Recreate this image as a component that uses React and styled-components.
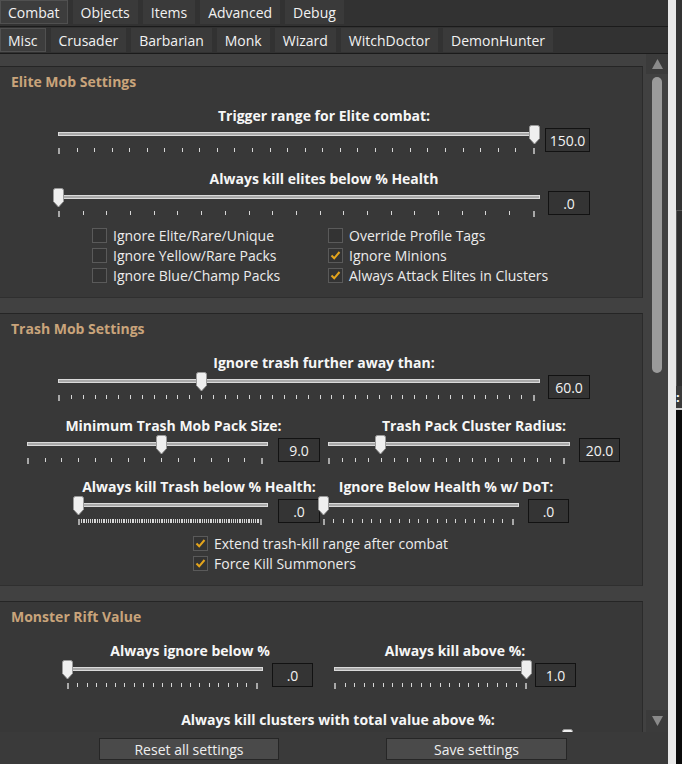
import React from 'react'
import styled, { createGlobalStyle } from 'styled-components'

const Global = createGlobalStyle`
  html, body { margin: 0; padding: 0; background: #333333; }
  body { font-family: "Open Sans", "Noto Sans", sans-serif; color: #eeeeee; }
  * { box-sizing: border-box; }
`

const Root = styled.div`
  display: flex;
  width: 682px;
  height: 764px;
  overflow: hidden;
`

const Main = styled.div`
  width: 668px;
  display: flex;
  flex-direction: column;
  background: #333333;
`

const TabStrip = styled.div`
  display: flex;
  gap: 5px;
  height: 27px;
  padding-top: ${(p) => p.$top}px;
  border-bottom: 1px solid #1b1b1b;
  background: #323232;
`

const Tab = styled.div`
  height: 24px;
  padding: 0 7px;
  display: flex;
  align-items: center;
  font-size: 14px;
  color: #f2f2f2;
  background: ${(p) => (p.$active ? '#3d3d3d' : '#3a3a3a')};
  border: 1px solid ${(p) => (p.$active ? '#505050' : '#3a3a3a')};
`

const Body = styled.div`
  flex: 1;
  display: flex;
  min-height: 0;
  background: #414141;
`

const Viewport = styled.div`
  flex: 1;
  overflow: hidden;
  padding: 12px 3px 0 0;
`

const Group = styled.section`
  background: #383838;
  border-top: 1px solid #252525;
  border-right: 1px solid #2b2b2b;
  border-bottom: 1px solid #2f2f2f;
  padding: 6px 0 12px;
  margin-bottom: ${(p) => p.$mb ?? 15}px;
`

const GroupTitle = styled.div`
  padding-left: 11px;
  height: 18px;
  line-height: 18px;
  font-size: 14px;
  font-weight: 700;
  color: #c9a47b;
  margin-bottom: 16px;
`

const SliderRow = styled.div`
  display: flex;
  margin-top: ${(p) => p.$mt || 0}px;
`

const Block = styled.div`
  margin-left: ${(p) => p.$ml}px;
  display: flex;
  flex-direction: column;
`

const Label = styled.div`
  height: 18px;
  line-height: 18px;
  text-align: center;
  font-size: 14px;
  font-weight: 700;
  color: #f6f6f6;
  white-space: nowrap;
`

const Controls = styled.div`
  display: flex;
  align-items: flex-start;
`

const TrackArea = styled.div`
  width: ${(p) => p.$w}px;
  display: flex;
  flex-direction: column;
`

const TrackWrap = styled.div`
  position: relative;
  height: 20px;
`

const Line = styled.div`
  margin-top: 7px;
  height: 4px;
  background: #a9a9a9;
  border: 1px solid #dadada;
`

const ThumbSvg = styled.svg`
  position: absolute;
  top: 0;
`

const Ticks = styled.div`
  margin-top: 3px;
  width: ${(p) => p.$w}px;
  height: 4px;
  display: flex;
  justify-content: space-between;
  align-items: flex-start;
`

const Tick = styled.span`
  flex: none;
  width: ${(p) => (p.$end ? 2 : 1)}px;
  height: ${(p) => (p.$end ? 6 : 4)}px;
  background: ${(p) => (p.$end ? '#a8a8a8' : '#d6d6d6')};
`

const ValueBox = styled.div`
  margin-left: ${(p) => p.$gap}px;
  margin-top: 3px;
  width: ${(p) => p.$w}px;
  height: 24px;
  border: 1px solid #121212;
  background: #343434;
  display: flex;
  align-items: center;
  justify-content: center;
  font-size: 14px;
  color: #f2f2f2;
`

const Checks = styled.div`
  margin-top: 10px;
  padding-left: ${(p) => p.$pl}px;
  display: grid;
  grid-template-columns: ${(p) => p.$cols};
  grid-auto-rows: 20px;
`

const CheckRow = styled.label`
  display: flex;
  align-items: center;
  gap: 6px;
  font-size: 14px;
  color: #ececec;
  white-space: nowrap;
`

const Box = styled.span`
  width: 15px;
  height: 15px;
  border: 1px solid #5a5a5a;
  background: #333333;
  display: flex;
  align-items: center;
  justify-content: center;
`

const ScrollBar = styled.div`
  width: 22px;
  display: flex;
  flex-direction: column;
`

const ArrowBtn = styled.div`
  height: ${(p) => p.$h}px;
  background: #3b3b3b;
  display: flex;
  align-items: center;
  justify-content: center;
`

const ScrollTrack = styled.div`
  flex: 1;
  padding: 3px 6px 0;
`

const ScrollThumb = styled.div`
  height: 296px;
  border-radius: 5px;
  background: #9b9b9b;
`

const BottomBar = styled.div`
  height: 32px;
  display: flex;
  gap: 107px;
  padding: 6px 0 0 99px;
  background: #3a3a3a;
`

const Button = styled.button`
  width: ${(p) => p.$w}px;
  height: 22px;
  background: #4a4a4a;
  border: 1px solid #262626;
  color: #efefef;
  font-family: "Open Sans", "Noto Sans", sans-serif;
  font-size: 14px;
  padding: 0;
`

const Edge = styled.div`
  width: 8px;
  background: #e8e8e8;
`

const Far = styled.div`
  width: 6px;
  display: flex;
  flex-direction: column;
  background: #333333;
`

const FarPiece = styled.div`
  height: ${(p) => p.$h}px;
  flex: ${(p) => (p.$grow ? 1 : 'none')};
  background: ${(p) => p.$bg};
  border-left: ${(p) => (p.$line ? '1px solid #575757' : 'none')};
  border-top: ${(p) => (p.$line ? '1px solid #575757' : 'none')};
  font-size: 13px;
  font-weight: 700;
  color: #fff;
  line-height: 22px;
  overflow: hidden;
`

const Thumb = ({ left }) => (
  <ThumbSvg width="13" height="20" viewBox="0 0 13 20" style={{ left }}>
    <path d="M1.5 2.5 Q1.5 0.5 3.5 0.5 H9.5 Q11.5 0.5 11.5 2.5 V13.5 L6.5 19 L1.5 13.5 Z" fill="#efefef" stroke="#9a9a9a" />
  </ThumbSvg>
)

const Slider = ({ label, value, pos, w, ticks, gap, box, ml }) => {
  const span = w - 6
  return (
    <Block $ml={ml}>
      <Label>{label}</Label>
      <Controls>
        <TrackArea $w={w}>
          <TrackWrap>
            <Line />
            <Thumb left={Math.round(pos * span) - 6} />
          </TrackWrap>
          <Ticks $w={span + 1}>
            {Array.from({ length: ticks }, (_, i) => (
              <Tick key={i} $end={i === 0 || i === ticks - 1} />
            ))}
          </Ticks>
        </TrackArea>
        <ValueBox $gap={gap} $w={box}>{value}</ValueBox>
      </Controls>
    </Block>
  )
}

const Check = ({ label, on }) => (
  <CheckRow>
    <Box>
      {on && (
        <svg width="13" height="13" viewBox="0 0 13 13">
          <path d="M2.5 6.5 L5.2 9.3 L10.5 3" fill="none" stroke="#e3a41c" strokeWidth="2" />
        </svg>
      )}
    </Box>
    {label}
  </CheckRow>
)

const Triangle = ({ down }) => (
  <svg width="11" height="10" viewBox="0 0 11 10">
    <path d={down ? 'M0 0 H11 L5.5 10 Z' : 'M0 10 H11 L5.5 0 Z'} fill="#8a8a8a" />
  </svg>
)

const topTabs = ['Combat', 'Objects', 'Items', 'Advanced', 'Debug']
const classTabs = ['Misc', 'Crusader', 'Barbarian', 'Monk', 'Wizard', 'WitchDoctor', 'DemonHunter']

export default function App() {
  return (
    <Root>
      <Global />
      <Main>
        <TabStrip $top={0}>
          {topTabs.map((t, i) => <Tab key={t} $active={i === 0}>{t}</Tab>)}
        </TabStrip>
        <TabStrip $top={1}>
          {classTabs.map((t, i) => <Tab key={t} $active={i === 0}>{t}</Tab>)}
        </TabStrip>
        <Body>
          <Viewport>
            <Group>
              <GroupTitle>Elite Mob Settings</GroupTitle>
              <SliderRow>
                <Slider ml={58} w={482} ticks={28} gap={5} box={45} pos={1} label="Trigger range for Elite combat:" value="150.0" />
              </SliderRow>
              <SliderRow $mt={18}>
                <Slider ml={58} w={482} ticks={21} gap={8} box={42} pos={0} label="Always kill elites below % Health" value=".0" />
              </SliderRow>
              <Checks $pl={92} $cols="236px auto">
                <Check label="Ignore Elite/Rare/Unique" />
                <Check label="Override Profile Tags" />
                <Check label="Ignore Yellow/Rare Packs" />
                <Check label="Ignore Minions" on />
                <Check label="Ignore Blue/Champ Packs" />
                <Check label="Always Attack Elites in Clusters" on />
              </Checks>
            </Group>

            <Group $mb={15}>
              <GroupTitle>Trash Mob Settings</GroupTitle>
              <SliderRow>
                <Slider ml={58} w={482} ticks={41} gap={8} box={42} pos={0.3} label="Ignore trash further away than:" value="60.0" />
              </SliderRow>
              <SliderRow $mt={18}>
                <Slider ml={27} w={241} ticks={15} gap={10} box={42} pos={0.571} label="Minimum Trash Mob Pack Size:" value="9.0" />
                <Slider ml={8} w={242} ticks={19} gap={9} box={41} pos={0.222} label="Trash Pack Cluster Radius:" value="20.0" />
              </SliderRow>
              <SliderRow $mt={16}>
                <Slider ml={78} w={190} ticks={101} gap={10} box={42} pos={0} label="Always kill Trash below % Health:" value=".0" />
                <Slider ml={3} w={196} ticks={21} gap={9} box={41} pos={0} label="Ignore Below Health % w/ DoT:" value=".0" />
              </SliderRow>
              <Checks $pl={193} $cols="auto">
                <Check label="Extend trash-kill range after combat" on />
                <Check label="Force Kill Summoners" on />
              </Checks>
            </Group>

            <Group>
              <GroupTitle>Monster Rift Value</GroupTitle>
              <SliderRow>
                <Slider ml={67} w={196} ticks={21} gap={9} box={41} pos={0} label="Always ignore below %" value=".0" />
                <Slider ml={21} w={198} ticks={21} gap={3} box={41} pos={1} label="Always kill above %:" value="1.0" />
              </SliderRow>
              <SliderRow $mt={24}>
                <Slider ml={58} w={515} ticks={21} gap={4} box={41} pos={1} label="Always kill clusters with total value above %:" value="" />
              </SliderRow>
            </Group>
          </Viewport>
          <ScrollBar>
            <ArrowBtn $h={20}><Triangle /></ArrowBtn>
            <ScrollTrack><ScrollThumb /></ScrollTrack>
            <ArrowBtn $h={22}><Triangle down /></ArrowBtn>
          </ScrollBar>
        </Body>
        <BottomBar>
          <Button $w={180}>Reset all settings</Button>
          <Button $w={181}>Save settings</Button>
        </BottomBar>
      </Main>
      <Edge />
      <Far>
        <FarPiece $h={210} $bg="#333333" />
        <FarPiece $h={176} $bg="#2f2f2f" $line />
        <FarPiece $h={22} $bg="#3a3a3a">:</FarPiece>
        <FarPiece $h={2} $bg="#d0d0d0" />
        <FarPiece $grow $bg="#0b0b0b" />
      </Far>
    </Root>
  )
}
